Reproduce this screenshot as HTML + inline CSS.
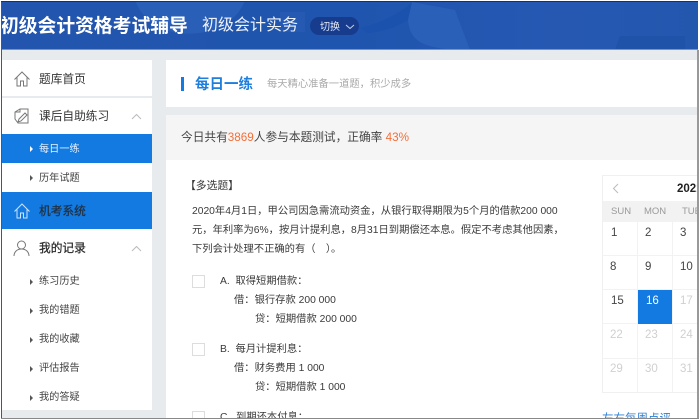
<!DOCTYPE html>
<html lang="zh"><head><meta charset="utf-8"><style>
html,body{margin:0;padding:0;width:700px;height:420px;overflow:hidden;background:#fff}
*{box-sizing:border-box}
body{font-family:"Liberation Sans","Noto Sans CJK SC",sans-serif;position:relative;color:#444}
.a{position:absolute;white-space:nowrap}
.sub{font-size:10.2px;color:#444;left:39px;line-height:14px}
.tri{position:absolute;left:30px;width:0;height:0;border-left:3px solid #555;border-top:3px solid transparent;border-bottom:3px solid transparent}
.main{font-size:11.7px;left:39px;color:#333;line-height:16px}
.t{font-size:10.3px;color:#3a3a3a;line-height:14px}
.box{position:absolute;left:192px;width:13px;height:13px;border:1px solid #ddd;background:#fff}
.d{position:absolute;font-size:11.5px;color:#444;line-height:14px}
.g{color:#d0d0d0}
.h{position:absolute;font-size:9.5px;color:#999;top:206px;line-height:12px}
.vl{position:absolute;top:201px;width:1px;height:191px;background:#f2f2f2}
.hl{position:absolute;left:602px;width:96px;height:1px;background:#f2f2f2}
</style></head><body>
<div class="a" style="left:0;top:0;width:700px;height:420px;background:#e8ebee"></div>
<div class="a" style="left:0;top:0;width:700px;height:50px;background:linear-gradient(90deg,#2355ae,#1f55ae 50%,#2658b2 80%,#2357ae);overflow:hidden">
<svg width="700" height="50" style="position:absolute;left:0;top:0"><path d="M135 0C145 28 175 38 205 32C225 28 240 15 245 0Z" fill="#2a5fb8"/><path d="M360 28C385 22 405 10 412 2L408 20C395 28 380 32 368 33Z" fill="#1a52ad"/><path d="M408 20C410 40 420 50 470 50L455 10L412 2Z" fill="#2b60b9"/><path d="M280 12h25v20h-25z" fill="#2a5cb4" opacity=".7"/><path d="M620 36h65v14h-70z" fill="#1f53aa"/></svg>
</div>
<div class="a" style="left:0;top:49px;width:700px;height:1px;background:#6d97d8"></div>
<div class="a" style="left:0;top:14px;font-size:18.8px;line-height:24px;font-weight:bold;color:#fff">初级会计资格考试辅导</div>
<div class="a" style="left:202px;top:15px;font-size:16px;line-height:22px;color:#eef3fb">初级会计实务</div>
<div class="a" style="left:310px;top:17px;width:49px;height:18px;border-radius:9px;background:#173c8e"></div>
<div class="a" style="left:320px;top:21px;font-size:10px;line-height:13px;color:#e4eaf6">切换</div>
<svg class="a" style="left:345px;top:24px" width="10" height="6"><path d="M1 1l4 3.500L9 1" fill="none" stroke="#c5d2ec" stroke-width="1"/></svg>

<!-- sidebar -->
<div class="a" style="left:2px;top:60px;width:150px;height:36px;background:#fff"></div>
<div class="a" style="left:2px;top:98px;width:150px;height:312px;background:#fff"></div>
<div class="a" style="left:2px;top:134px;width:150px;height:29px;background:#127ae0"></div>
<div class="a" style="left:2px;top:192px;width:150px;height:37px;background:#127ae0"></div>
<svg class="a" style="left:13px;top:70px" width="18" height="18" fill="none" stroke="#777" stroke-width="1"><path d="M1.500 9.500L9 2l7.500 7.500M4 7.500V16h3.500v-5h3v5H14V7.500"/></svg>
<div class="a main" style="top:72px">题库首页</div>
<svg class="a" style="left:13px;top:107px" width="18" height="18" fill="none" stroke="#777" stroke-width="1"><path d="M2 5l5-3h8v14H5L2 12zM7 2v3H2M6 12l6-6 2 2-6 6-3 1z"/></svg>
<div class="a main" style="top:109px">课后自助练习</div>
<svg class="a" style="left:131px;top:113px" width="11" height="7" fill="none" stroke="#bbb" stroke-width="1"><path d="M1 6l4.500-4.500L10 6"/></svg>
<div class="tri" style="top:146px;border-left-color:#fff"></div>
<div class="a sub" style="top:143px;color:#e8f2fd">每日一练</div>
<div class="tri" style="top:175px"></div>
<div class="a sub" style="top:172px">历年试题</div>
<svg class="a" style="left:13px;top:202px" width="18" height="18" fill="none" stroke="#cfe4fb" stroke-width="1"><path d="M1.500 9.500L9 2l7.500 7.500M4 7.500V16h3.500v-5h3v5H14V7.500"/></svg>
<div class="a main" style="top:204px;color:#22303f;-webkit-text-stroke:.25px #22303f">机考系统</div>
<svg class="a" style="left:13px;top:239px" width="18" height="18" fill="none" stroke="#777" stroke-width="1"><circle cx="8.500" cy="6" r="4"/><path d="M1 17c0-4 3-7 7.500-7S16 13 16 17"/></svg>
<div class="a main" style="top:241px;color:#2a2a2a;-webkit-text-stroke:.25px #2a2a2a">我的记录</div>
<svg class="a" style="left:131px;top:245px" width="11" height="7" fill="none" stroke="#bbb" stroke-width="1"><path d="M1 6l4.500-4.500L10 6"/></svg>
<div class="tri" style="top:279px"></div><div class="a sub" style="top:275px">练习历史</div>
<div class="tri" style="top:308px"></div><div class="a sub" style="top:304px">我的错题</div>
<div class="tri" style="top:337px"></div><div class="a sub" style="top:333px">我的收藏</div>
<div class="tri" style="top:366px"></div><div class="a sub" style="top:362px">评估报告</div>
<div class="tri" style="top:395px"></div><div class="a sub" style="top:391px">我的答疑</div>

<!-- content -->
<div class="a" style="left:166px;top:60px;width:532px;height:47px;background:#fff"></div>
<div class="a" style="left:181px;top:77px;width:3px;height:14px;background:#127ae0"></div>
<div class="a" style="left:195px;top:76px;font-size:14.500px;line-height:18px;font-weight:bold;color:#1f7fdc">每日一练</div>
<div class="a" style="left:267px;top:78px;font-size:10.300px;line-height:14px;color:#aaa">每天精心准备一道题，积少成多</div>
<div class="a" style="left:166px;top:115px;width:532px;height:45px;background:#f5f5f5"></div>
<div class="a" style="left:181px;top:130px;font-size:11.700px;line-height:16px;color:#444">今日共有<span style="color:#f36f38">3869</span>人参与本题测试，正确率 <span style="color:#f36f38">43%</span></div>
<div class="a" style="left:166px;top:160px;width:532px;height:258px;background:#fff"></div>

<div class="a t" style="left:185px;top:179px;font-size:10.800px">【多选题】</div>
<div class="a t" style="left:192px;top:205px">2020年4月1日，甲公司因急需流动资金，从银行取得期限为5个月的借款200 000</div>
<div class="a t" style="left:192px;top:224px">元，年利率为6%，按月计提利息，8月31日到期偿还本息。假定不考虑其他因素，</div>
<div class="a t" style="left:192px;top:243px">下列会计处理不正确的有（　）。</div>
<div class="box" style="top:275px"></div>
<div class="a t" style="left:220px;top:275px">A.&nbsp; 取得短期借款：</div>
<div class="a t" style="left:234px;top:294px">借：银行存款 200 000</div>
<div class="a t" style="left:255px;top:313px">贷：短期借款 200 000</div>
<div class="box" style="top:343px"></div>
<div class="a t" style="left:220px;top:343px">B.&nbsp; 每月计提利息：</div>
<div class="a t" style="left:234px;top:362px">借：财务费用 1 000</div>
<div class="a t" style="left:255px;top:381px">贷：短期借款 1 000</div>
<div class="box" style="top:411px"></div>
<div class="a t" style="left:220px;top:411px">C.&nbsp; 到期还本付息：</div>

<!-- calendar -->
<div class="a" style="left:602px;top:175px;width:96px;height:218px;border:1px solid #f0f0f0;border-right:0;background:#fff"></div>
<svg class="a" style="left:612px;top:183px" width="8" height="11" fill="none" stroke="#bbb" stroke-width="1"><path d="M6 1L1.500 5.500 6 10"/></svg>
<div class="a" style="left:677px;top:182px;font-size:11.500px;line-height:14px;font-weight:bold;color:#222;width:21px;overflow:hidden">2021</div>
<div class="a" style="left:603px;top:201px;width:95px;height:21px;background:#f2f2f2"></div>
<div class="h" style="left:611px">SUN</div><div class="h" style="left:644px">MON</div><div class="h" style="left:682px;width:16px;overflow:hidden">TUE</div>
<div class="vl" style="left:637px"></div><div class="vl" style="left:672px"></div>
<div class="hl" style="top:255px"></div><div class="hl" style="top:289px"></div><div class="hl" style="top:323px"></div><div class="hl" style="top:358px"></div>
<div class="a" style="left:638px;top:290px;width:34px;height:34px;background:#127ae0"></div>
<div class="d" style="left:611px;top:226px">1</div><div class="d" style="left:645px;top:226px">2</div><div class="d" style="left:680px;top:226px">3</div>
<div class="d" style="left:610px;top:260px">8</div><div class="d" style="left:645px;top:260px">9</div><div class="d" style="left:680px;top:260px">10</div>
<div class="d" style="left:611px;top:294px">15</div><div class="d" style="left:646px;top:294px;color:#fff">16</div><div class="d g" style="left:680px;top:294px">17</div>
<div class="d g" style="left:610px;top:328px">22</div><div class="d g" style="left:645px;top:328px">23</div><div class="d g" style="left:680px;top:328px">24</div>
<div class="d g" style="left:610px;top:362px">29</div><div class="d g" style="left:645px;top:362px">30</div><div class="d g" style="left:680px;top:362px">31</div>
<div class="a" style="left:602px;top:412px;font-size:11.500px;line-height:14px;color:#2a7fd6">左右每周点评</div>

<!-- frame -->
<div class="a" style="left:0;top:0;width:2px;height:420px;background:#fff"></div>
<div class="a" style="left:1px;top:1px;width:1px;height:418px;background:#555"></div>
<div class="a" style="left:0;top:0;width:700px;height:1px;background:#fff"></div>
<div class="a" style="left:1px;top:1px;width:697px;height:1px;background:#16306e"></div>
<div class="a" style="left:698px;top:0;width:2px;height:420px;background:#fff"></div>
<div class="a" style="left:697px;top:50px;width:2px;height:369px;background:#999"></div>
<div class="a" style="left:1px;top:418px;width:698px;height:2px;background:#fff"></div>
<div class="a" style="left:1px;top:418px;width:698px;height:1px;background:#888"></div>
</body></html>
